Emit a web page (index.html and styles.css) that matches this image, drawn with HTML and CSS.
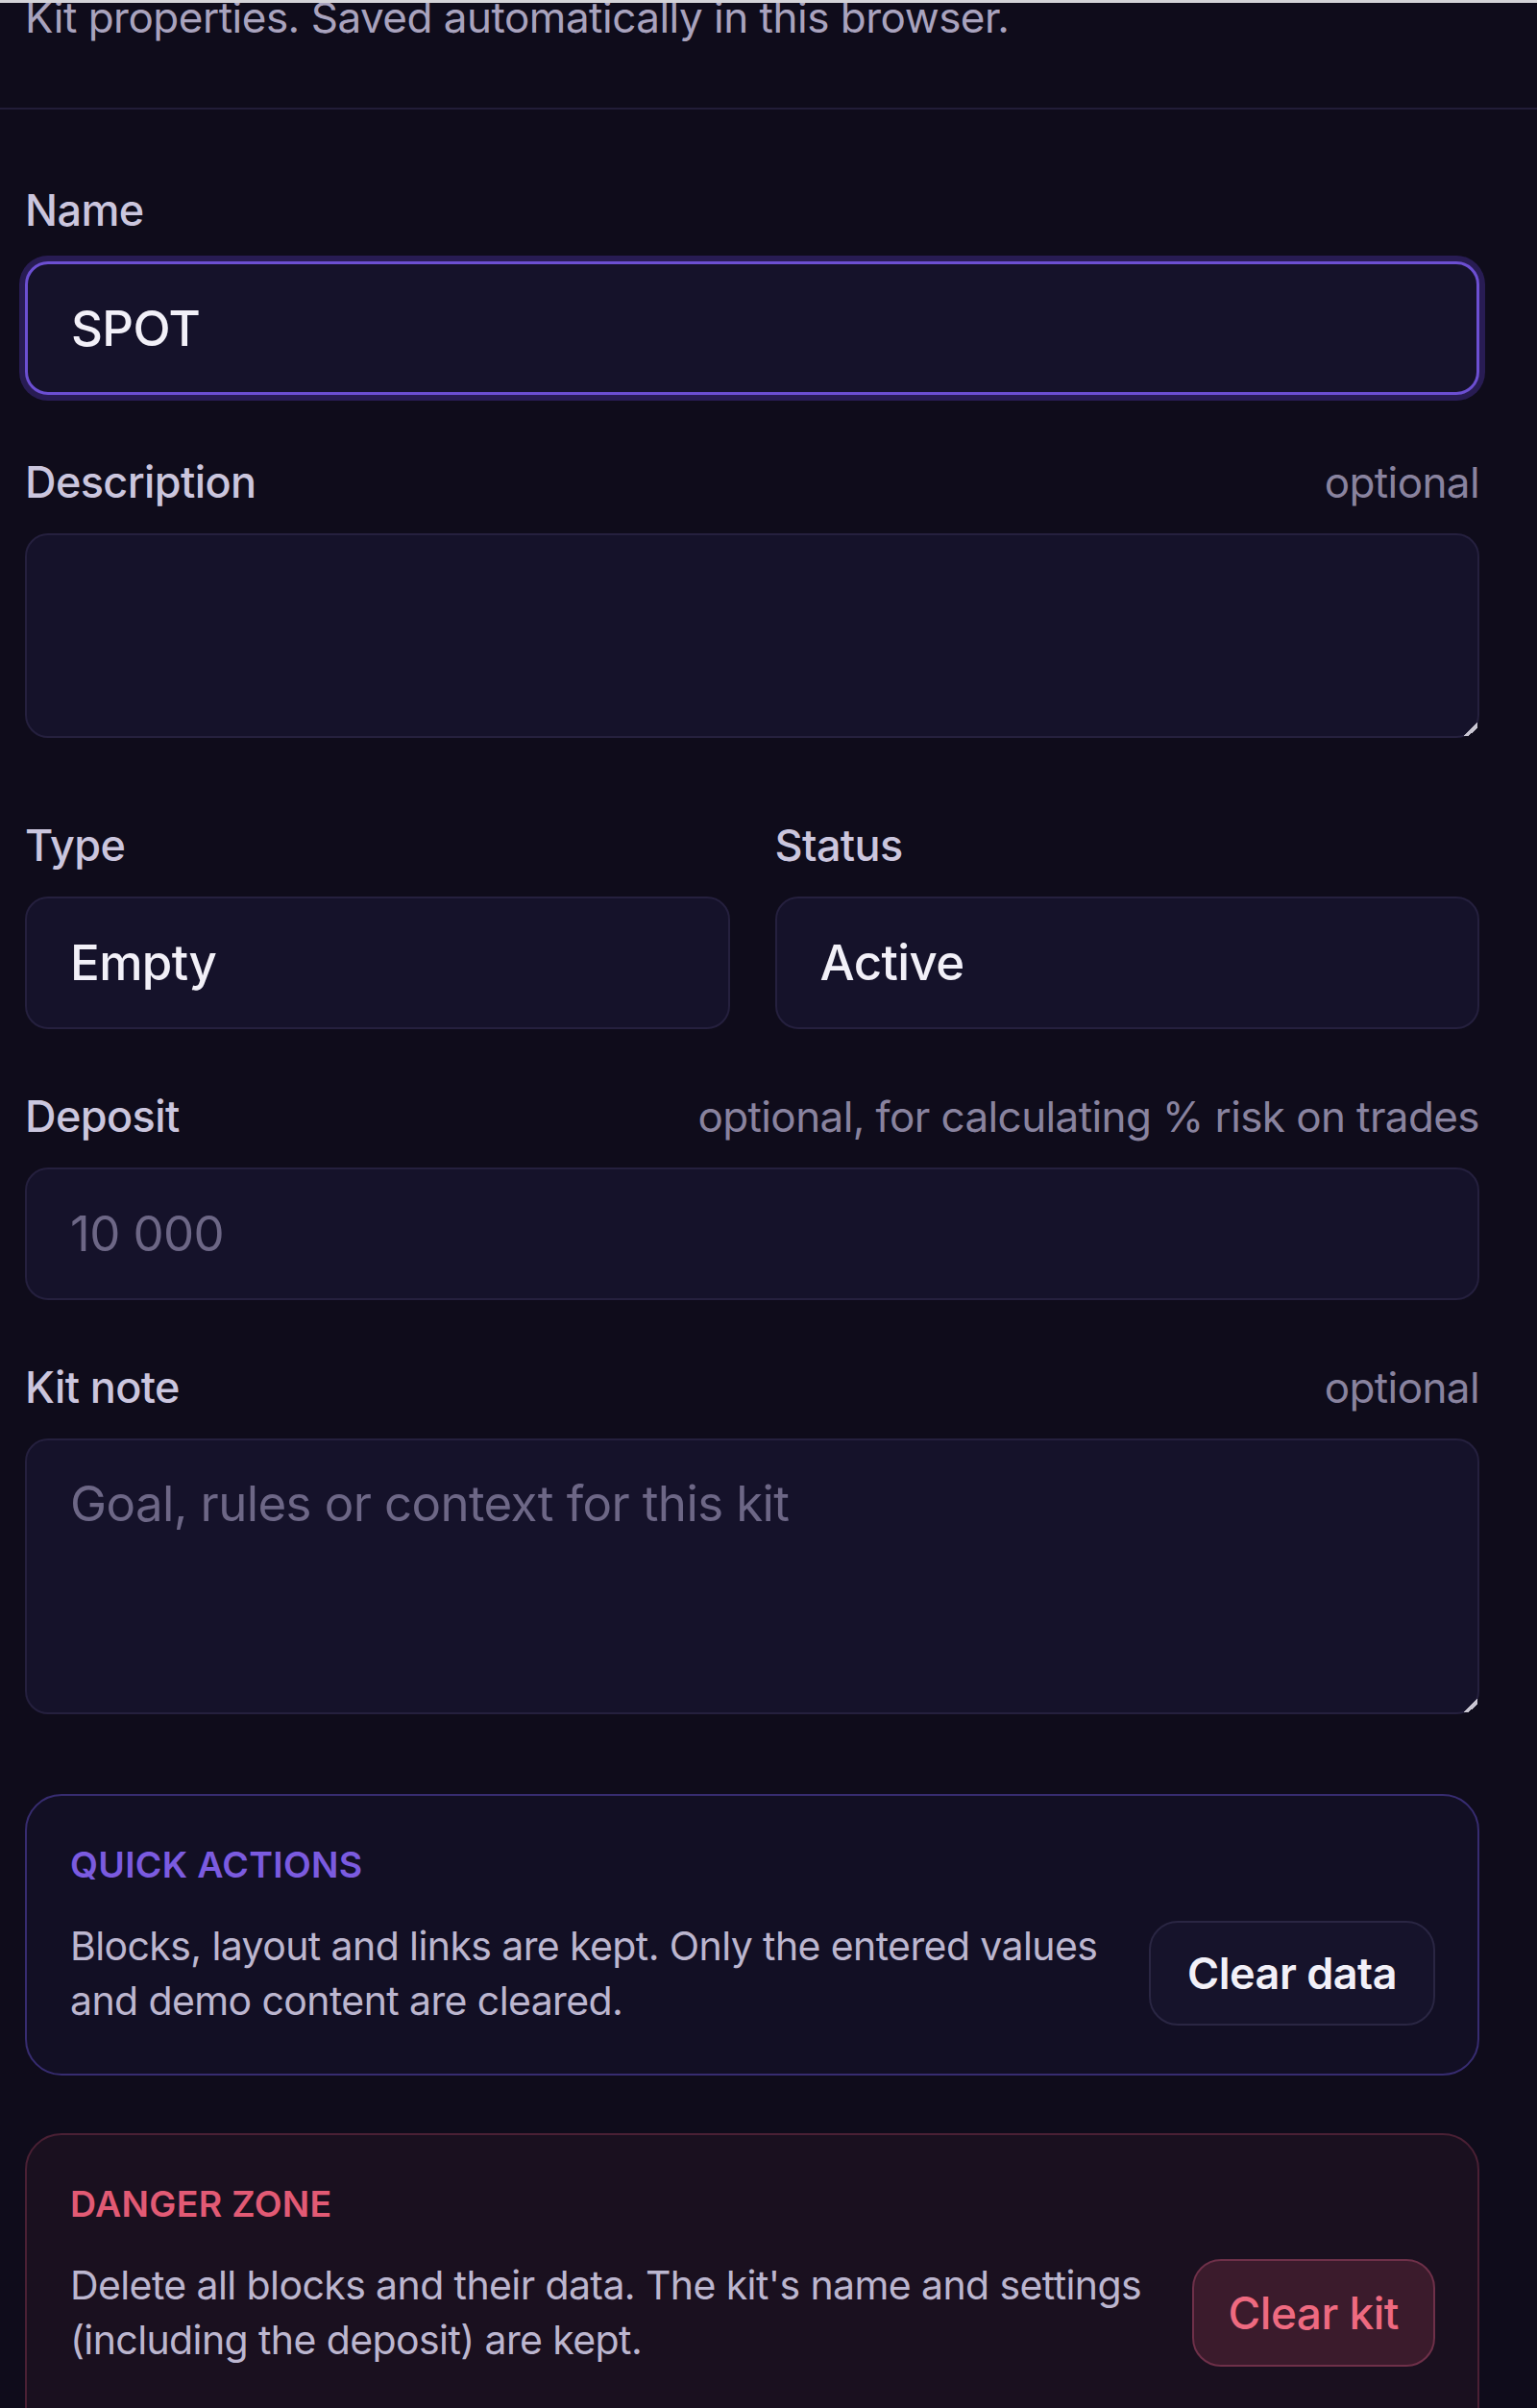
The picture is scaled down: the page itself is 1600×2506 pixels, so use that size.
FILE: index.html
```html
<!DOCTYPE html>
<html lang="en">
<head>
  <meta charset="UTF-8">
  <meta name="viewport" content="width=device-width, initial-scale=1.0">
  <title>Kit properties</title>
  <link rel="stylesheet" href="styles.css">
</head>
<body>
  <div class="panel-head">
    <p class="panel-sub">Kit properties. Saved automatically in this browser.</p>
  </div>

  <form class="kit-form" onsubmit="return false">
    <div class="field">
      <div class="field-label"><label for="kitName">Name</label></div>
      <input id="kitName" class="control control-focus" type="text" value="SPOT">
    </div>

    <div class="field field-area">
      <div class="field-label"><label for="kitDesc">Description</label><span class="hint">optional</span></div>
      <textarea id="kitDesc" class="control area-desc"></textarea>
    </div>

    <div class="field-row">
      <div class="field">
        <div class="field-label"><label for="kitType">Type</label></div>
        <input id="kitType" class="control" type="text" value="Empty">
      </div>
      <div class="field">
        <div class="field-label"><label for="kitStatus">Status</label></div>
        <input id="kitStatus" class="control" type="text" value="Active">
      </div>
    </div>

    <div class="field">
      <div class="field-label"><label for="kitDeposit">Deposit</label><span class="hint">optional, for calculating % risk on trades</span></div>
      <input id="kitDeposit" class="control" type="text" placeholder="10 000">
    </div>

    <div class="field field-area field-last">
      <div class="field-label"><label for="kitNote">Kit note</label><span class="hint">optional</span></div>
      <textarea id="kitNote" class="control area-note" placeholder="Goal, rules or context for this kit"></textarea>
    </div>

    <div class="card-stack">
      <div class="card card-quick">
        <div class="card-title">QUICK ACTIONS</div>
        <div class="card-body">
          <p>Blocks, layout and links are kept. Only the entered values and demo content are cleared.</p>
          <button class="btn" type="button">Clear data</button>
        </div>
      </div>

      <div class="card card-danger">
        <div class="card-title">DANGER ZONE</div>
        <div class="card-body">
          <p>Delete all blocks and their data. The kit's name and settings (including the deposit) are kept.</p>
          <button class="btn btn-danger" type="button">Clear kit</button>
        </div>
      </div>
    </div>
  </form>
</body>
</html>
```

FILE: styles.css
```css
body {
  margin: 0;
  background: #0f0c1b;
  color: #ece9f5;
  font-family: Inter, 'Noto Sans', sans-serif;
  color-scheme: dark;
  border-top: 3px solid #d4d3d8;
}
.panel-head {
  padding: 0 26px 62px;
  border-bottom: 2px solid #221d38;
}
.panel-sub {
  margin: -15px 0 0;
  font-size: 44px;
  line-height: 1.4;
  color: #a9a3be;
  letter-spacing: -0.5px;
}
.kit-form {
  padding: 80px 60px 0 26px;
  display: flex;
  flex-direction: column;
  gap: 66px;
}
.field {
  display: flex;
  flex-direction: column;
  gap: 28px;
}
.field-area {
  margin-bottom: 21px;
}
.field-last {
  margin-bottom: 17px;
}
.field-row {
  display: grid;
  grid-template-columns: 1fr 1fr;
  gap: 47px;
}
.field-label {
  display: flex;
  justify-content: space-between;
  align-items: baseline;
  font-size: 45px;
  line-height: 50px;
  letter-spacing: -0.6px;
}
.field-label label {
  color: #cbc6de;
  font-weight: 500;
}
.hint {
  color: #89839f;
  font-size: 44px;
}
.control {
  box-sizing: border-box;
  width: 100%;
  height: 138px;
  margin: 0;
  padding: 0 45px;
  background: #15122a;
  border: 2px solid #25203e;
  border-radius: 24px;
  color: #f2f0f8;
  font-family: inherit;
  font-size: 51px;
  font-weight: 500;
  letter-spacing: -0.6px;
  outline: none;
}
.control::placeholder {
  color: #6d6786;
  font-weight: 400;
}
.control-focus {
  height: 139px;
  border: 3px solid #6c4fd2;
  box-shadow: 0 0 0 6px rgba(88, 60, 190, 0.35);
}
textarea.control {
  display: block;
  padding: 30px 45px;
  line-height: 1.4;
  resize: vertical;
}
textarea.control::-webkit-scrollbar {
  width: 26px;
  height: 26px;
}
textarea.control::-webkit-resizer {
  background: linear-gradient(135deg, transparent 52%, #c9c6d2 52%, #c9c6d2 70%, transparent 70%);
}
.area-desc {
  height: 213px;
}
.area-note {
  height: 287px;
}
.card-stack {
  display: flex;
  flex-direction: column;
  gap: 60px;
}
.card {
  box-sizing: border-box;
  padding: 50px 44px 47px 45px;
  border-radius: 38px;
  border: 2px solid #372c70;
  background: #120f24;
}
.card-title {
  font-size: 37.5px;
  line-height: 44px;
  font-weight: 600;
  letter-spacing: 0.3px;
  color: #7b5be0;
}
.card-body {
  margin-top: 34px;
  display: flex;
  align-items: center;
  justify-content: space-between;
  gap: 48px;
}
.card-body p {
  margin: 0;
  flex: 1;
  font-size: 41px;
  line-height: 57px;
  color: #bcb6cf;
  letter-spacing: -0.6px;
}
.btn {
  flex-shrink: 0;
  height: 109px;
  padding: 0 38px;
  background: #16132b;
  border: 2px solid #2a2643;
  border-radius: 30px;
  color: #f2f0f8;
  font-family: inherit;
  font-size: 45px;
  font-weight: 600;
  letter-spacing: -0.5px;
  cursor: pointer;
}
.card-danger {
  border-color: #4a2034;
  background: #1a101f;
  padding-bottom: 80px;
}
.card-danger .card-title {
  color: #e25a74;
}
.btn-danger {
  height: 112px;
  padding: 0 36px;
  background: #3b1b2c;
  border-color: #6e3049;
  color: #ee6a80;
  font-size: 46px;
  font-weight: 500;
}
```
